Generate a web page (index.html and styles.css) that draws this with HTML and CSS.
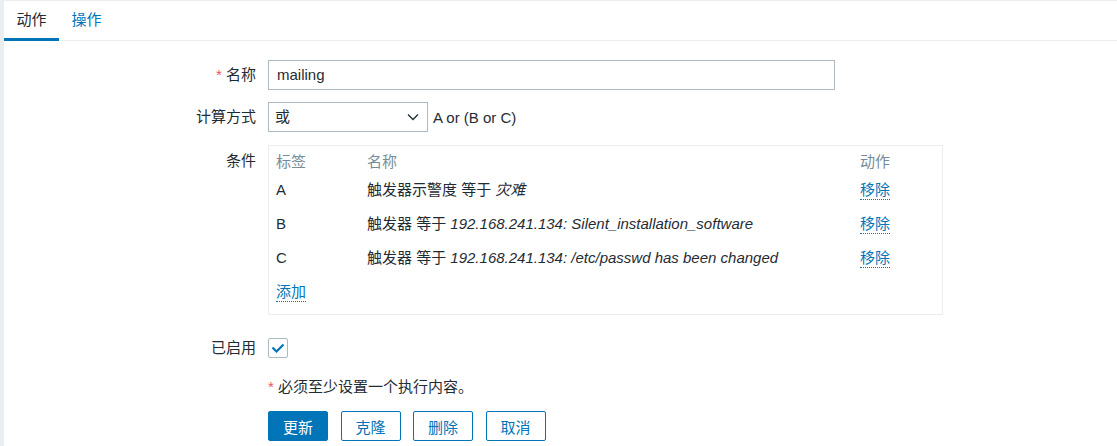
FILE: index.html
```html
<!DOCTYPE html>
<html lang="zh">
<head>
<meta charset="utf-8">
<link rel="stylesheet" href="styles.css">
</head>
<body>
<div class="panel">
  <div class="tabs">
    <div class="tab active">动作</div>
    <div class="tab">操作</div>
  </div>
  <div class="form">
    <div class="label"><span class="req">*</span> 名称</div>
    <div class="field"><div class="input">mailing</div></div>

    <div class="label">计算方式</div>
    <div class="field row">
      <div class="select">或<svg class="chev" width="12" height="8" viewBox="0 0 12 8"><path d="M1 1.5 L6 6.5 L11 1.5" fill="none" stroke="#1f2c33" stroke-width="1.3"/></svg></div>
      <span class="formula">A or (B or C)</span>
    </div>

    <div class="label top">条件</div>
    <div class="field">
      <div class="conds">
        <div class="th">标签</div><div class="th">名称</div><div class="th">动作</div>
        <div class="td">A</div><div class="td">触发器示警度 等于 <i>灾难</i></div><div class="td"><span class="link">移除</span></div>
        <div class="td">B</div><div class="td">触发器 等于 <i>192.168.241.134: Silent_installation_software</i></div><div class="td"><span class="link">移除</span></div>
        <div class="td">C</div><div class="td">触发器 等于 <i>192.168.241.134: /etc/passwd has been changed</i></div><div class="td"><span class="link">移除</span></div>
        <div class="td"><span class="link">添加</span></div>
      </div>
    </div>

    <div class="label check-label">已启用</div>
    <div class="field check-field">
      <div class="checkbox"><svg width="14" height="10" viewBox="0 0 14 10"><path d="M1.5 4.5 L5.5 8.5 L12.5 1.5" fill="none" stroke="#0275b8" stroke-width="2.2"/></svg></div>
    </div>

    <div class="label"></div>
    <div class="field note"><span class="req">*</span> 必须至少设置一个执行内容。</div>

    <div class="label"></div>
    <div class="field buttons">
      <button class="btn primary">更新</button>
      <button class="btn">克隆</button>
      <button class="btn">删除</button>
      <button class="btn">取消</button>
    </div>
  </div>
</div>
</body>
</html>
```

FILE: styles.css
```css
html, body {
  margin: 0;
  padding: 0;
  height: 100%;
}
body {
  background: #ebeef0;
  font-family: "Liberation Sans", Arial, "Noto Sans CJK SC", sans-serif;
  font-size: 15px;
  color: #1f2c33;
}
.panel {
  background: #ffffff;
  margin: 1px 0 0 4px;
  height: calc(100% - 1px);
  box-sizing: border-box;
}
.tabs {
  display: flex;
  height: 39px;
  border-bottom: 1px solid #ebeef0;
  box-sizing: content-box;
}
.tab {
  padding: 0 12.5px;
  line-height: 37px;
  color: #0275b8;
  border-bottom: 3px solid transparent;
  margin-bottom: -1px;
}
.tab.active {
  color: #1f2c33;
  border-bottom-color: #0275b8;
}
.form {
  display: grid;
  grid-template-columns: 252px 1fr;
  column-gap: 12px;
  row-gap: 12px;
  padding-top: 19px;
  align-items: start;
}
.label {
  text-align: right;
  line-height: 30px;
  height: 30px;
}
.label.top {
  margin-top: 2px;
}
.req {
  color: #e45959;
}
.input {
  width: 567px;
  height: 30px;
  box-sizing: border-box;
  border: 1px solid #acbbc2;
  padding: 0 8px;
  line-height: 28px;
  background: #fff;
}
.row {
  display: flex;
  align-items: center;
  gap: 5px;
}
.select {
  width: 160px;
  height: 30px;
  box-sizing: border-box;
  border: 1px solid #acbbc2;
  padding: 0 7px 0 6px;
  line-height: 28px;
  display: flex;
  justify-content: space-between;
  align-items: center;
}
.chev {
  margin-right: 1px;
}
.conds {
  width: 675px;
  box-sizing: border-box;
  border: 1px solid #ebeef0;
  padding: 5px 7px 5px;
  display: grid;
  grid-template-columns: 91px 493px 1fr;
  margin-top: 1px;
}
.th {
  color: #768d99;
  line-height: 22px;
  height: 22px;
}
.td {
  line-height: 34px;
  height: 34px;
}
.td i {
  font-style: italic;
}
.link {
  color: #0275b8;
  border-bottom: 1px dotted #0275b8;
  padding-bottom: 1px;
}
.check-label {
  margin-top: 6px;
}
.check-field {
  margin-top: 6px;
  height: 30px;
  display: flex;
  align-items: center;
}
.checkbox {
  width: 20px;
  height: 20px;
  box-sizing: border-box;
  border: 1px solid #acbbc2;
  border-radius: 2px;
  display: flex;
  align-items: center;
  justify-content: center;
}
.note {
  line-height: 30px;
  margin-top: -3px;
}
.buttons {
  display: flex;
  gap: 12.5px;
  margin-top: -6px;
}
.btn {
  width: 60px;
  height: 30px;
  box-sizing: border-box;
  border: 1px solid #0275b8;
  border-radius: 2px;
  background: #fff;
  color: #0275b8;
  font-family: inherit;
  font-size: 15px;
  padding: 0;
}
.btn.primary {
  background: #0275b8;
  color: #fff;
}
```
